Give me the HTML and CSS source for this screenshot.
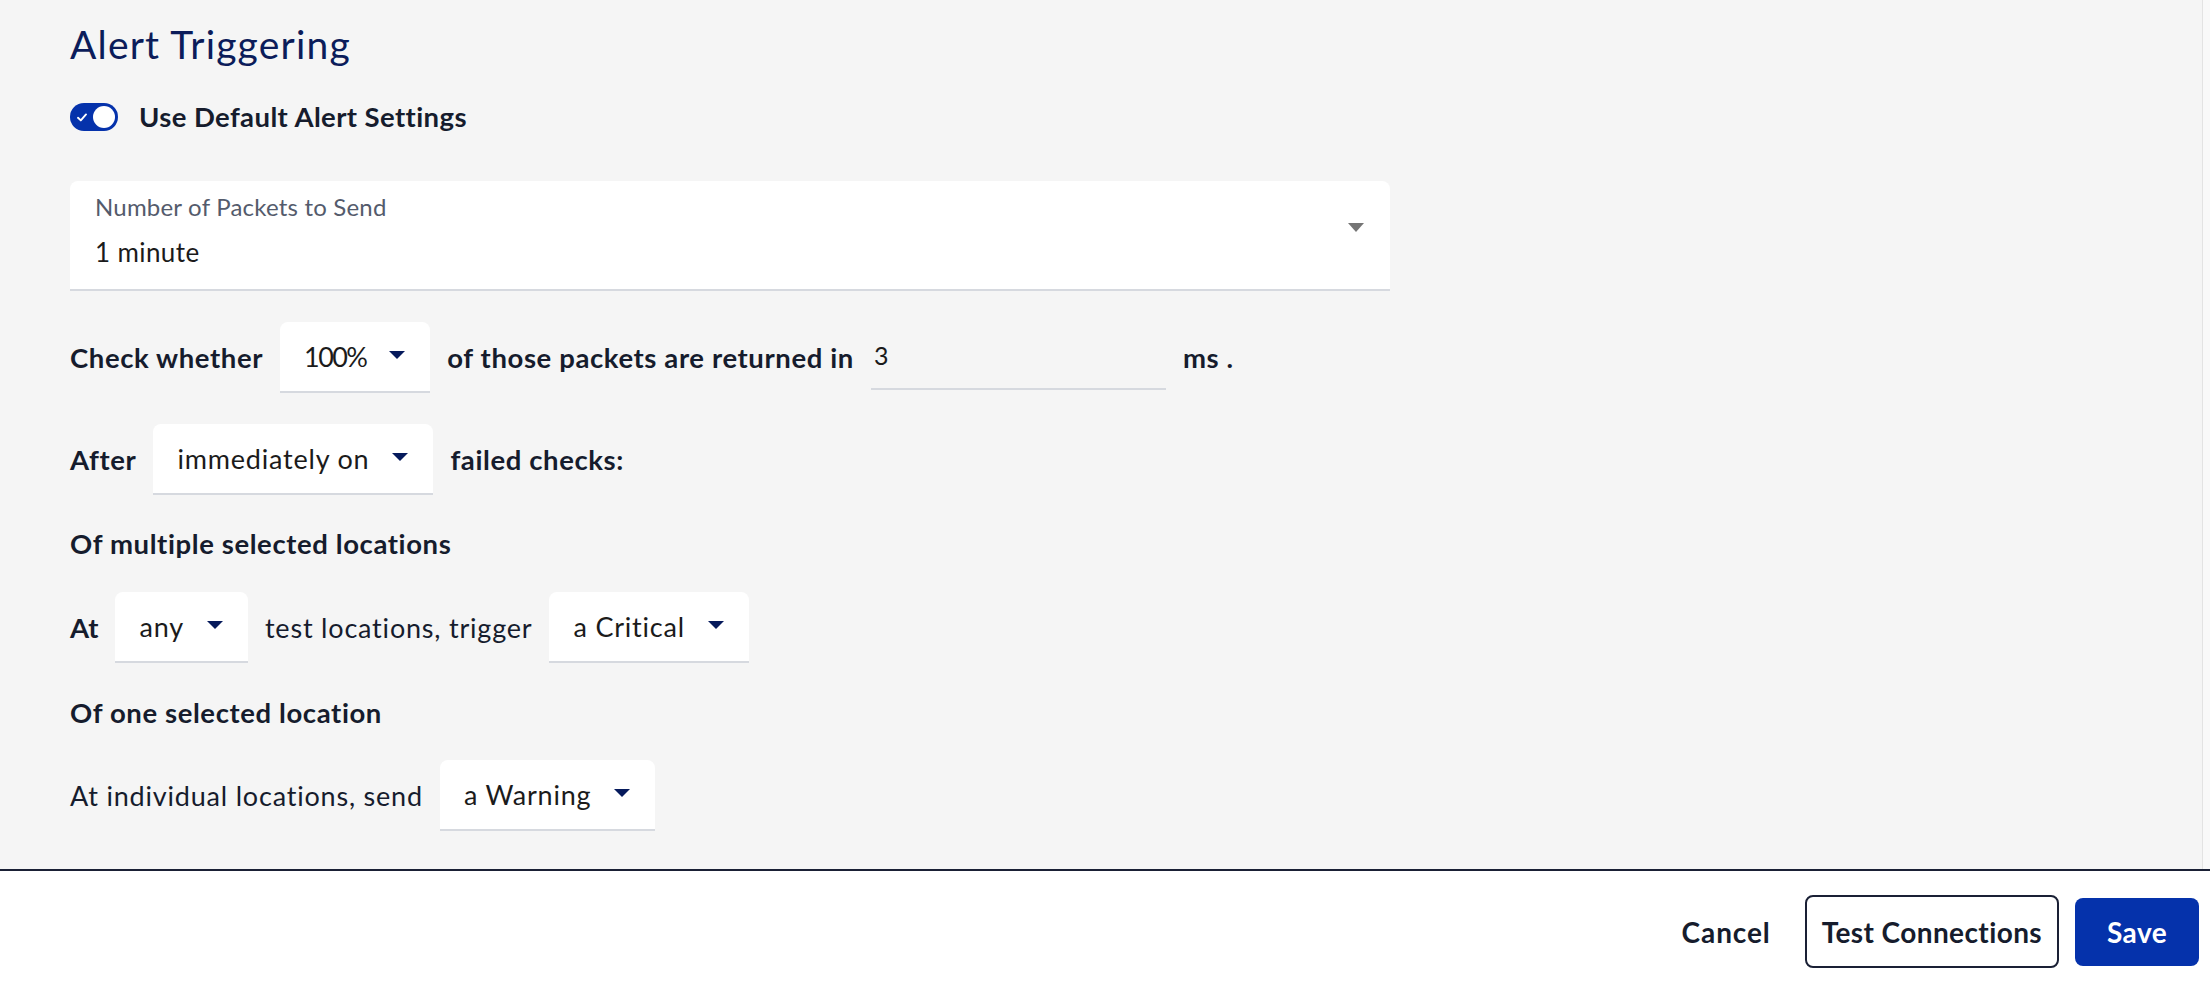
FILE: index.html
```html
<!DOCTYPE html>
<html lang="en">
<head>
<meta charset="utf-8">
<title>Alert Triggering</title>
<link rel="stylesheet" href="styles.css">
</head>
<body>
<div class="page">
  <div class="main">
    <div class="content">
      <h1 class="title">Alert Triggering</h1>
      <div class="toggle-row">
        <span class="toggle">
          <svg class="check" width="10" height="9" viewBox="0 0 10 9"><path d="M1 4.8 L3.8 7.4 L9 1.4" fill="none" stroke="#fff" stroke-width="1.9" stroke-linecap="round" stroke-linejoin="round"/></svg>
          <span class="knob"></span>
        </span>
        <span class="toggle-label">Use Default Alert Settings</span>
      </div>
      <div class="field">
        <div class="field-text">
          <div class="field-label">Number of Packets to Send</div>
          <div class="field-value">1 minute</div>
        </div>
        <span class="field-arrow"></span>
      </div>
      <div class="row row-check">
        <span class="b">Check whether</span>
        <span class="select select-num"><span>100%</span><span class="caret"></span></span>
        <span class="b">of those packets are returned in</span>
        <span class="input">3</span>
        <span class="b">ms .</span>
      </div>
      <div class="row row-after">
        <span class="b">After</span>
        <span class="select"><span>immediately on</span><span class="caret"></span></span>
        <span class="b">failed checks:</span>
      </div>
      <div class="heading heading-multi">Of multiple selected locations</div>
      <div class="row row-any">
        <span class="b b-at">At</span>
        <span class="select"><span>any</span><span class="caret"></span></span>
        <span>test locations, trigger</span>
        <span class="select"><span>a Critical</span><span class="caret"></span></span>
      </div>
      <div class="heading heading-one">Of one selected location</div>
      <div class="row row-ind">
        <span>At individual locations, send</span>
        <span class="select"><span>a Warning</span><span class="caret"></span></span>
      </div>
    </div>
    <div class="scrollbar"></div>
  </div>
  <div class="footer">
    <button class="btn btn-text">Cancel</button>
    <button class="btn btn-outline">Test Connections</button>
    <button class="btn btn-primary">Save</button>
  </div>
</div>
</body>
</html>
```
FILE: styles.css
```css
html, body {
  margin: 0;
  padding: 0;
}
body {
  font-family: Lato, "Liberation Sans", sans-serif;
  color: #161c2d;
  background: #fff;
}
.page {
  width: 2210px;
  height: 992px;
  display: flex;
  flex-direction: column;
  overflow: hidden;
}
.main {
  height: 869px;
  flex: none;
  background: #f5f5f5;
  display: flex;
}
.content {
  flex: 1;
  padding: 21px 0 0 70px;
  display: flex;
  flex-direction: column;
  align-items: flex-start;
}
.scrollbar {
  width: 7px;
  border-left: 1px solid #e3e3e3;
  background: #f9f9f9;
}
.title {
  margin: 0;
  font-size: 39px;
  line-height: 46px;
  font-weight: 400;
  color: #0b1c5a;
  letter-spacing: 1.2px;
}
.toggle-row {
  display: flex;
  align-items: center;
  gap: 21px;
  height: 40px;
  margin-top: 30px;
}
.toggle {
  width: 48px;
  height: 28px;
  border-radius: 14px;
  background: #0532ab;
  display: flex;
  align-items: center;
  justify-content: space-between;
  padding: 0 3px 0 7px;
  box-sizing: border-box;
}
.check {
  display: block;
}
.knob {
  width: 22px;
  height: 22px;
  border-radius: 50%;
  background: #fff;
}
.toggle-label {
  font-weight: 700;
  font-size: 27.5px;
  letter-spacing: 0.4px;
  line-height: 32px;
}
.field {
  margin-top: 44px;
  width: 1320px;
  box-sizing: border-box;
  background: #fff;
  border-radius: 8px 8px 0 0;
  border-bottom: 2px solid #d6d9df;
  padding: 12px 26px 21px 25px;
  display: flex;
  align-items: center;
  justify-content: space-between;
}
.field-label {
  font-size: 24px;
  letter-spacing: 0.2px;
  line-height: 28px;
  color: #545b6c;
}
.field-value {
  font-size: 26px;
  letter-spacing: 0.4px;
  line-height: 32px;
  margin-top: 15px;
  color: #1b1b1b;
}
.field-arrow {
  width: 0;
  height: 0;
  border-left: 8px solid transparent;
  border-right: 8px solid transparent;
  border-top: 9px solid #757575;
  margin-bottom: 6px;
}
.row {
  display: flex;
  align-items: center;
  gap: 17px;
  font-size: 27px;
  letter-spacing: 0.8px;
  line-height: 32px;
}
.b {
  font-weight: 700;
  font-size: 27.5px;
  letter-spacing: 0.6px;
}
.b-at {
  letter-spacing: 0;
}
.select {
  height: 71px;
  box-sizing: border-box;
  background: #fff;
  border-radius: 8px 8px 0 0;
  border-bottom: 2px solid #d6d9df;
  display: flex;
  align-items: center;
  gap: 23px;
  padding: 0 25px 0 24px;
  font-size: 27px;
  letter-spacing: 0.8px;
  color: #1b1b1b;
}
.select-num {
  letter-spacing: -1.6px;
}
.caret {
  width: 0;
  height: 0;
  border-left: 8px solid transparent;
  border-right: 8px solid transparent;
  border-top: 8px solid #061a5c;
  margin-bottom: 3px;
}
.input {
  width: 295px;
  height: 68px;
  align-self: flex-start;
  box-sizing: border-box;
  border-bottom: 2px solid #d6d9df;
  display: flex;
  align-items: center;
  padding-left: 3px;
  font-size: 25px;
  letter-spacing: 0;
  color: #1b1b1b;
}
.row-check { margin-top: 31px; }
.row-after { margin-top: 31px; }
.heading {
  font-weight: 700;
  font-size: 27.5px;
  letter-spacing: 0.6px;
  line-height: 32px;
}
.heading-multi { margin-top: 33px; }
.row-any { margin-top: 32px; }
.heading-one { margin-top: 34px; }
.row-ind { margin-top: 31px; }
.footer {
  flex: 1;
  border-top: 2px solid #1a2035;
  background: #fff;
  display: flex;
  justify-content: flex-end;
  align-items: center;
  gap: 16px;
  padding-right: 11px;
}
.btn {
  font-family: inherit;
  font-weight: 700;
  font-size: 28px;
  letter-spacing: 0.4px;
  margin: 0;
  display: flex;
  align-items: center;
  box-sizing: border-box;
  cursor: pointer;
}
.btn-text {
  background: transparent;
  border: none;
  color: #161c2d;
  padding: 0 18px 0 12px;
  height: 68px;
  letter-spacing: 0.9px;
}
.btn-outline {
  height: 73px;
  border: 2px solid #1a2035;
  border-radius: 8px;
  padding: 0 15px;
  background: #fff;
  color: #161c2d;
}
.btn-primary {
  height: 68px;
  padding: 0 32px;
  border: none;
  border-radius: 8px;
  background: #0532ab;
  color: #fff;
}
```
